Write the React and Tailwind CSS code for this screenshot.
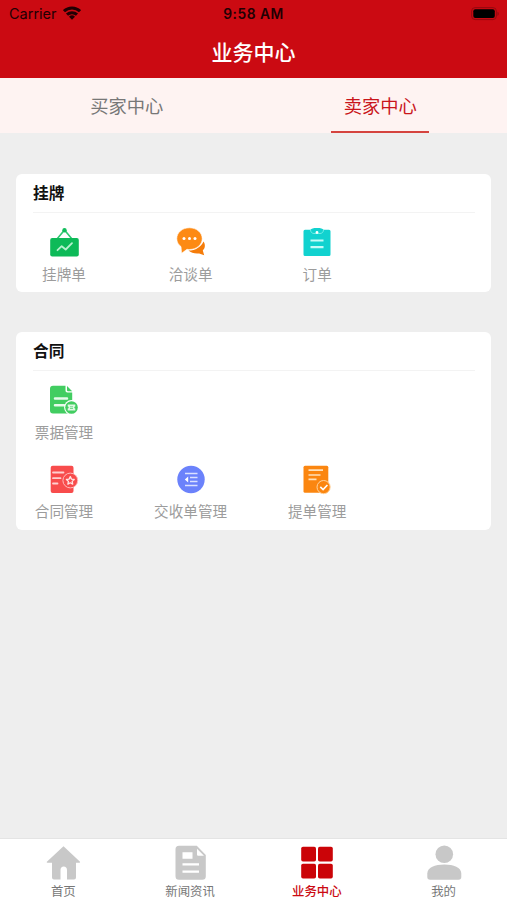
import React from 'react';

function Icon({ children }) {
  return (
    <svg width="36" height="36" viewBox="0 0 36 36" fill="none" className="block shrink-0">
      {children}
    </svg>
  );
}

const Board = () => (
  <Icon>
    <path d="M11 14l7.5-9 7.5 9" stroke="#2fc872" strokeWidth="1.6" />
    <circle cx="18.5" cy="5.2" r="2.2" fill="#12bd5c" />
    <rect x="4.2" y="13" width="28.6" height="18.5" rx="2" fill="#0dba58" />
    <path d="M11.500 25.200l4.200-4 4 3.300 6.300-6.300" stroke="#b5f0cd" strokeWidth="1.800" strokeLinecap="round" strokeLinejoin="round" />
  </Icon>
);

const Chat = () => (
  <Icon>
    <path d="M30.500 16.500c2.300 3.500 1.500 7-.7 8.900l1.400 4.800-5-1.800c-4 .7-8.200-.7-10.700-2.800 7-.2 12.500-3.400 15-9.100z" fill="#f57c0a" />
    <path d="M16.500 2.800C9.300 2.800 3.800 7.500 3.800 13.700c0 3.200 1.500 6 4.200 7.900l.6 6.700 5.400-4c1 .2 1.700.2 2.500.2 7 0 12.700-4.700 12.700-10.800S23.500 2.800 16.500 2.800z" fill="#fd8a14" stroke="#fff" strokeWidth=".6" />
    <circle cx="11" cy="13.500" r="1.500" fill="#fff" />
    <circle cx="16.500" cy="13.500" r="1.500" fill="#fff" />
    <circle cx="22" cy="13.500" r="1.500" fill="#fff" />
  </Icon>
);

const Clipboard = () => (
  <Icon>
    <path d="M6 4.800h5.500C12.500 3.600 14 3 18 3s5.500.6 6.500 1.800H30a1.500 1.500 0 0 1 1.500 1.500v23.200A1.500 1.500 0 0 1 30 31H6a1.500 1.500 0 0 1-1.500-1.500V6.300A1.500 1.500 0 0 1 6 4.800z" fill="#11d2cf" />
    <path d="M11.500 4.800c0 2.200 1.500 3.700 3.500 3.700h6c2 0 3.500-1.500 3.500-3.700" stroke="#7aeee7" strokeWidth=".9" />
    <circle cx="18" cy="7.500" r="1.400" fill="#fff" />
    <path d="M11.500 15.500h13M11.500 22.200h13" stroke="#c5fbf8" strokeWidth="2.200" />
  </Icon>
);

const Invoice = () => (
  <Icon>
    <path d="M7 2.800h12.500v4.700c0 1.300.7 2 2 2h4.700v21H7a3 3 0 0 1-3-3V5.800a3 3 0 0 1 3-3z" fill="#42cd61" />
    <path d="M21 3l5.200 5.200H22a1 1 0 0 1-1-1z" fill="#42cd61" />
    <path d="M9 15.500h12M9 22.200h9" stroke="#e6faea" strokeWidth="2.500" strokeLinecap="round" />
    <circle cx="25.500" cy="24.500" r="7.400" fill="#fff" />
    <circle cx="25.500" cy="24.500" r="6.300" fill="#42cd61" />
    <path d="M21.700 21.600h7.600v1.900a1 1 0 0 0 0 2v1.900h-7.600v-1.900a1 1 0 0 0 0-2z" fill="#dff8e4" />
    <path d="M24 23.800h3M24 25.500h3" stroke="#42cd61" strokeWidth=".7" />
  </Icon>
);

const Contract = () => (
  <Icon>
    <rect x="4.700" y="3.700" width="22.800" height="27.300" rx="2" fill="#f84c4c" />
    <path d="M7 10.500h10.500M7 16.200h7.500M7 21.500h4.500" stroke="#ffd0d0" strokeWidth="1.800" strokeLinecap="round" />
    <circle cx="24.300" cy="18.500" r="7.400" fill="#f84c4c" stroke="#ffbcbc" strokeWidth="1" />
    <path d="M24.300 14.600l1.200 2.500 2.700.4-2 1.900.5 2.700-2.400-1.300-2.400 1.300.5-2.700-2-1.900 2.700-.4z" stroke="#ffe4e4" strokeWidth="1.300" strokeLinejoin="round" />
  </Icon>
);

const Delivery = () => (
  <Icon>
    <circle cx="18" cy="17.500" r="13.700" fill="#6b82fb" />
    <path d="M12 11.500h12.500M17 15.500h7.500M17 19.500h7.500M12 23.500h12.500" stroke="#dbe1ff" strokeWidth="1.700" />
    <path d="M15.200 14.600v5.800L11.800 17.500z" fill="#fff" />
  </Icon>
);

const LadingBill = () => (
  <Icon>
    <rect x="4.500" y="3.700" width="24.800" height="27" rx="1.500" fill="#fb8610" />
    <path d="M9.500 8.200h14.500M9.500 13h12M9.500 17.300h8" stroke="#ffe0b8" strokeWidth="1.700" />
    <circle cx="24.600" cy="25.100" r="6.600" fill="#fb8610" stroke="#ffd4a0" strokeWidth="1" />
    <path d="M21.300 24.800l2.800 2.700 4.300-4.500" stroke="#fff" strokeWidth="1.600" />
  </Icon>
);

const Home = () => (
  <Icon>
    <path d="M18.500 1.200L35 16.800c.3.500 0 .9-.5.900H31v14.800a2 2 0 0 1-2 2h-7V25c0-2-1.300-3.500-3.300-3.500S15.500 23 15.500 25v9.500H9a2 2 0 0 1-2-2V17.700H2.300c-.6 0-.8-.5-.4-.9z" fill="#c8c8c8" />
  </Icon>
);

const News = () => (
  <Icon>
    <path d="M6.500.8h18.300L33.800 10v21.300a3.500 3.500 0 0 1-3.500 3.500H7a3.500 3.500 0 0 1-3.500-3.500V4.300A3.500 3.500 0 0 1 7 .8z" fill="#c8c8c8" />
    <path d="M10.500 7.200h10v6.500h-10zM10.500 18.200h16.500v2.200H10.500zM10.500 25.500h16.500v2.200H10.500zM25 3.800l7 6.900h-5.500c-1 0-1.500-.5-1.500-1.500z" fill="#fff" />
  </Icon>
);

const Grid = () => (
  <Icon>
    <g fill="#cb0408">
      <rect x="2.200" y="1.700" width="14.800" height="14.800" rx="1.800" />
      <rect x="19" y="1.700" width="14.800" height="14.800" rx="1.800" />
      <rect x="2.200" y="18.700" width="14.800" height="14.800" rx="1.800" />
      <rect x="19" y="18.700" width="14.800" height="14.800" rx="1.800" />
    </g>
  </Icon>
);

const User = () => (
  <Icon>
    <circle cx="18.300" cy="9.200" r="8.800" fill="#c8c8c8" />
    <path d="M1.300 32v-3.500C1.300 22.500 9 19.500 18.300 19.500s17 3 17 9V32a2.800 2.800 0 0 1-2.800 2.800H4.100A2.800 2.800 0 0 1 1.300 32z" fill="#c8c8c8" />
  </Icon>
);

function Entry({ icon: Glyph, label }) {
  return (
    <div className="flex w-24 flex-col items-center">
      <Glyph />
      <span className="mt-[3px] whitespace-nowrap text-[14.600px] leading-5 text-[#9c9c9c]">{label}</span>
    </div>
  );
}

function Card({ title, rows, className }) {
  return (
    <section className={`mx-4 rounded-md bg-white ${className}`}>
      <h2 className="ml-[17px] mr-4 h-[39px] border-b border-[#f3f3f3] text-[15.700px] font-bold leading-[37px] text-[#111]">{title}</h2>
      <div className="flex flex-col gap-5 pt-3">
        {rows.map((row, i) => (
          <div key={i} className="flex gap-[30.600px]">
            {row.map(([icon, label]) => (
              <Entry key={label} icon={icon} label={label} />
            ))}
          </div>
        ))}
      </div>
    </section>
  );
}

const NAV = [
  [Home, '首页'],
  [News, '新闻资讯'],
  [Grid, '业务中心'],
  [User, '我的'],
];

export default function App() {
  return (
    <div className="flex h-[900px] w-[507px] flex-col overflow-hidden bg-[#eee] font-['Noto_Sans_CJK_SC',sans-serif]">
      <header className="h-[78px] shrink-0 bg-[#cb0a12]">
        <div className="grid h-7 grid-cols-3 items-center px-[9px] font-[Inter,sans-serif] text-[#210003]">
          <div className="flex items-center gap-1.5 text-[14.500px]">
            <span>Carrier</span>
            <svg width="18" height="14" viewBox="0 0 18 14" fill="none" stroke="#210003" strokeWidth="3" className="-mt-0.5">
              <path d="M1 5.200a11.500 11.500 0 0 1 16 0" />
              <path d="M4 8.700a7.200 7.200 0 0 1 10 0" />
              <path d="M9 13.700L6 10.800a4.300 4.300 0 0 1 6 0z" fill="#210003" stroke="none" />
            </svg>
          </div>
          <span className="whitespace-nowrap text-center text-[13.800px] font-semibold tracking-[0.5px]">9:58 AM</span>
          <svg width="29" height="14" viewBox="0 0 29 14" className="-mr-0.5 justify-self-end">
            <rect x=".6" y=".6" width="24.800" height="12" rx="3.500" fill="none" stroke="#950910" />
            <rect x="2.300" y="2.300" width="21.500" height="8.800" rx="2" fill="#000" />
            <path d="M26.500 4.700v4c1.500-.4 1.500-3.600 0-4z" fill="#8b0910" />
          </svg>
        </div>
        <h1 className="text-center text-[21px] font-medium leading-[46px] text-white">业务中心</h1>
      </header>

      <nav className="flex h-[55px] shrink-0 bg-[#fef3f2] text-[18.300px] leading-[55px]">
        <div className="flex flex-1 justify-center text-[#777]">买家中心</div>
        <div className="flex flex-1 justify-center">
          <span className="h-[55px] w-[98px] border-b-2 border-[#d5443f] text-center text-[#c9151b]">卖家中心</span>
        </div>
      </nav>

      <main className="flex-1">
        <Card
          title="挂牌"
          className="mt-[41px] h-[118px]"
          rows={[[[Board, '挂牌单'], [Chat, '洽谈单'], [Clipboard, '订单']]]}
        />
        <Card
          title="合同"
          className="mt-10 h-[198px]"
          rows={[[[Invoice, '票据管理']], [[Contract, '合同管理'], [Delivery, '交收单管理'], [LadingBill, '提单管理']]]}
        />
      </main>

      <footer className="flex h-[62px] shrink-0 border-t border-[#e4e4e4] bg-white pt-1.5">
        {NAV.map(([Glyph, label]) => (
          <div key={label} className="flex flex-1 flex-col items-center">
            <Glyph />
            <span className={`text-[12.400px] leading-5 ${label === '业务中心' ? 'font-medium text-[#cb0a12]' : 'text-[#777]'}`}>
              {label}
            </span>
          </div>
        ))}
      </footer>
    </div>
  );
}
